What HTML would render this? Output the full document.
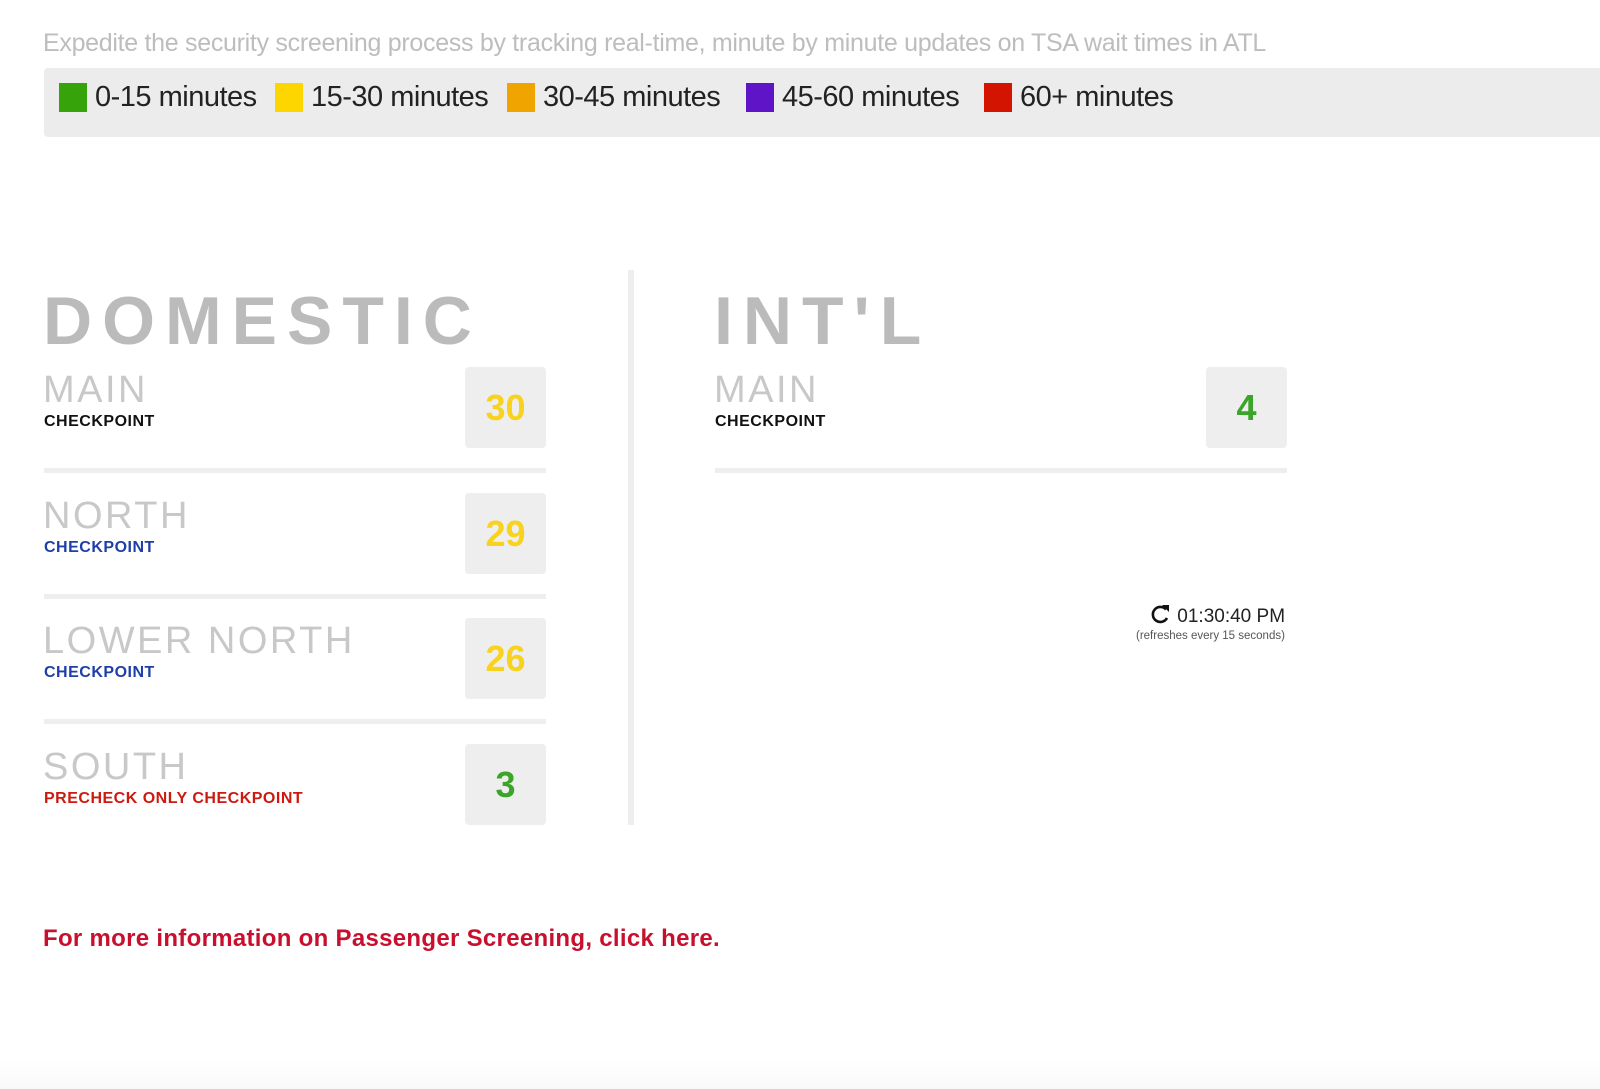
<!DOCTYPE html>
<html><head><meta charset="utf-8"><style>
html,body{margin:0;padding:0;background:#fff;width:1600px;height:1089px;overflow:hidden;position:relative;font-family:"Liberation Sans",sans-serif}
.a{position:absolute;white-space:nowrap}
.intro{left:43px;top:29px;font-size:25px;color:#bdbdbd;letter-spacing:-0.3px}
.legend{left:44px;top:68px;width:1580px;height:69px;background:#ececec;border-radius:4px}
.sw{position:absolute;top:15px;width:28px;height:29px}
.lt{position:absolute;top:13px;font-size:29px;color:#222;letter-spacing:-0.5px}
.h{font-size:68px;font-weight:bold;color:#bbb;letter-spacing:10px}
.nm{font-size:38px;color:#c8c8c8;letter-spacing:2.5px}
.ck{font-size:16px;font-weight:bold;letter-spacing:0.5px}
.box{position:absolute;width:81px;height:81px;background:#eee;border-radius:4px;font-size:36px;font-weight:bold;text-align:center;line-height:81px}
.sep{position:absolute;height:5px;background:#eee}
</style></head><body>
<div class="a intro">Expedite the security screening process by tracking real-time, minute by minute updates on TSA wait times in ATL</div>
<div class="a legend">
<div class="sw" style="left:15px;background:#36a30b"></div><div class="lt" style="left:51px">0-15 minutes</div>
<div class="sw" style="left:231px;background:#fdd600"></div><div class="lt" style="left:267px">15-30 minutes</div>
<div class="sw" style="left:463px;background:#f0a400"></div><div class="lt" style="left:499px">30-45 minutes</div>
<div class="sw" style="left:702px;background:#5f14c8"></div><div class="lt" style="left:738px">45-60 minutes</div>
<div class="sw" style="left:940px;background:#d31400"></div><div class="lt" style="left:976px">60+ minutes</div>
</div>
<div class="a" style="left:628px;top:270px;width:6px;height:555px;background:#eee"></div>
<div class="a h" style="left:43px;top:282px">DOMESTIC</div>
<div class="a h" style="left:714px;top:282px">INT'L</div>

<div class="a nm" style="left:43px;top:369px">MAIN</div>
<div class="a ck" style="left:44px;top:413px;color:#111">CHECKPOINT</div>
<div class="box" style="left:465px;top:367px;color:#f8d21c">30</div>
<div class="sep" style="left:44px;top:468px;width:502px"></div>

<div class="a nm" style="left:43px;top:495px">NORTH</div>
<div class="a ck" style="left:44px;top:539px;color:#1f3fa8">CHECKPOINT</div>
<div class="box" style="left:465px;top:493px;color:#f8d21c">29</div>
<div class="sep" style="left:44px;top:594px;width:502px"></div>

<div class="a nm" style="left:43px;top:620px">LOWER NORTH</div>
<div class="a ck" style="left:44px;top:664px;color:#1f3fa8">CHECKPOINT</div>
<div class="box" style="left:465px;top:618px;color:#f8d21c">26</div>
<div class="sep" style="left:44px;top:719px;width:502px"></div>

<div class="a nm" style="left:43px;top:746px">SOUTH</div>
<div class="a ck" style="left:44px;top:790px;color:#cc1a0f">PRECHECK ONLY CHECKPOINT</div>
<div class="box" style="left:465px;top:744px;color:#3aa528">3</div>

<div class="a nm" style="left:714px;top:369px">MAIN</div>
<div class="a ck" style="left:715px;top:413px;color:#111">CHECKPOINT</div>
<div class="box" style="left:1206px;top:367px;color:#3aa528">4</div>
<div class="sep" style="left:715px;top:468px;width:572px"></div>

<div class="a" style="left:1150px;top:604px;font-size:19px;color:#222">
<svg width="22" height="20" viewBox="0 0 22 20" style="vertical-align:-2px"><path d="M16 5.5A7.5 7.5 0 1 0 17 14" fill="none" stroke="#111" stroke-width="2.6"/><path d="M12 1h7v7z" fill="#111"/></svg> 01:30:40 PM</div>
<div class="a" style="left:1136px;top:630px;font-size:11.5px;color:#555">(refreshes every 15 seconds)</div>

<div class="a" style="left:43px;top:925px;font-size:24px;font-weight:bold;color:#c8102e;letter-spacing:0.3px">For more information on Passenger Screening, click here.</div>
<div class="a" style="left:0;top:1060px;width:1600px;height:29px;background:linear-gradient(#fff,#f9f9f9)"></div>
</body></html>
